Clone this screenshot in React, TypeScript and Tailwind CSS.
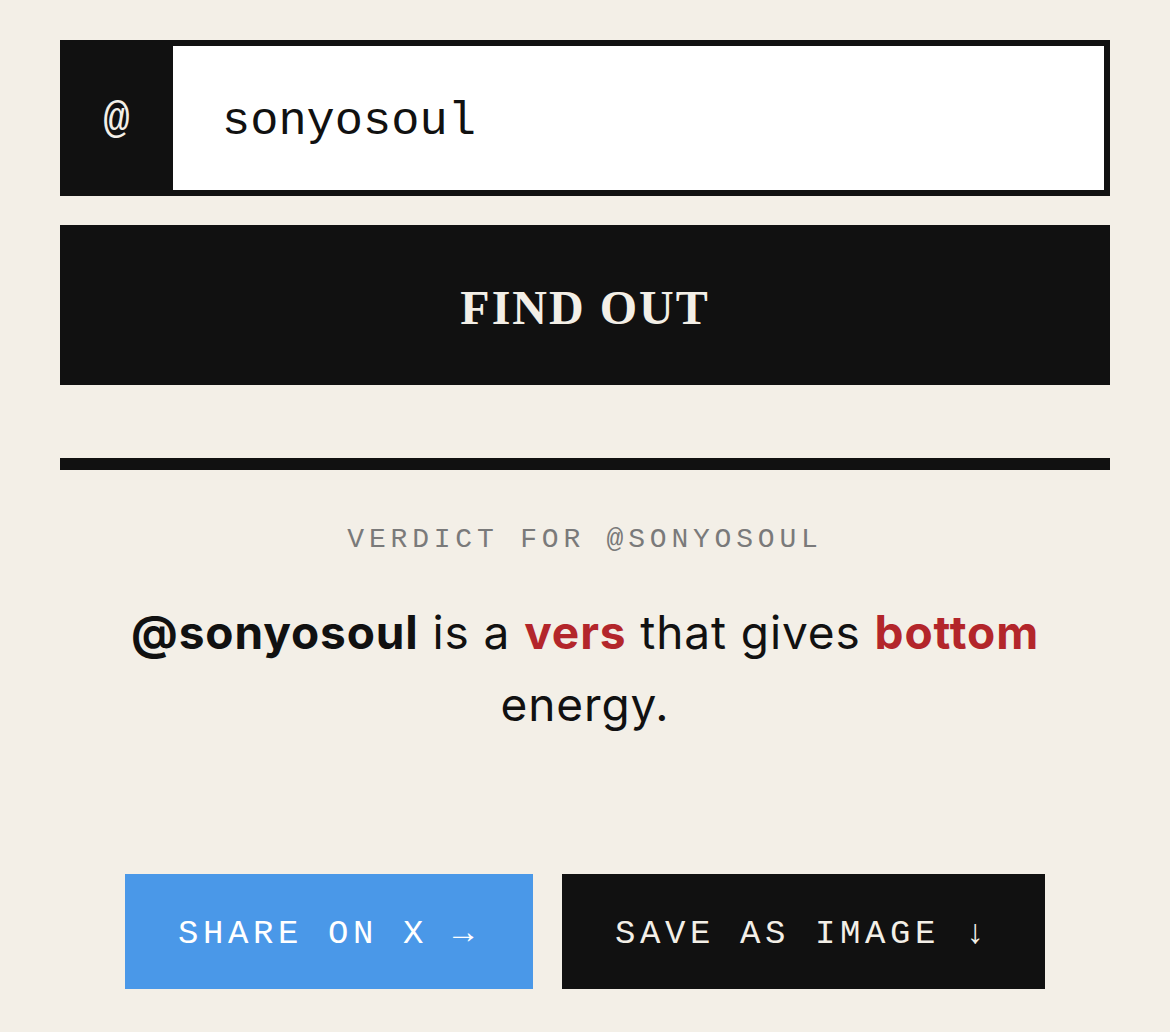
import React from 'react';

const mono = { fontFamily: '"Liberation Mono", "DejaVu Sans Mono", monospace' };

export default function App() {
  const handle = 'sonyosoul';

  return (
    <div className="min-h-[1032px] bg-[#f3efe7] pt-10">
      <div className="w-[1050px] mx-auto">
        {/* handle input */}
        <div className="flex h-[156px] border-[6px] border-l-0 border-[#111111] bg-white">
          <div
            className="w-[113px] bg-[#111111] flex items-center justify-center pt-1 text-[44px] text-[#f3efe7] leading-none"
            style={mono}
          >
            @
          </div>
          <div
            className="flex-1 flex items-center pl-[49px] pt-[6px] text-[47px] text-[#111111] leading-none"
            style={mono}
          >
            {handle}
          </div>
        </div>

        <button
          className="mt-[29px] w-full h-[160px] pt-[6px] bg-[#111111] text-[#f3efe7] text-[48px] font-bold tracking-[2px] leading-none"
          style={{ fontFamily: '"Liberation Serif", "DejaVu Serif", serif' }}
        >
          FIND OUT
        </button>

        <div className="mt-[73px] h-[12px] bg-[#111111]" />

        {/* verdict */}
        <p
          className="mt-[56px] text-center text-[28px] leading-none tracking-[4.8px] text-[#7a7a7a]"
          style={mono}
        >
          VERDICT FOR @{handle.toUpperCase()}
        </p>

        <p
          className="mt-[42px] mx-auto max-w-[960px] text-center text-[46px] leading-[72px] tracking-[0.9px] text-[#111111]"
          style={{ fontFamily: 'Inter, "Noto Sans", sans-serif' }}
        >
          <span className="font-bold">@{handle}</span> is a{' '}
          <span className="font-bold text-[#b3262b]">vers</span> that gives{' '}
          <span className="font-bold text-[#b3262b]">bottom</span> energy.
        </p>

        <div className="mt-[134px] flex justify-center gap-[29px]">
          <button
            className="h-[115px] pl-[53px] pr-[55px] pt-1 bg-[#4a98e8] text-white text-[34px] tracking-[4.6px] leading-none"
            style={mono}
          >
            SHARE ON X →
          </button>
          <button
            className="h-[115px] pl-[53px] pr-[55px] pt-1 bg-[#111111] text-[#f3efe7] text-[34px] tracking-[4.6px] leading-none"
            style={mono}
          >
            SAVE AS IMAGE ↓
          </button>
        </div>
      </div>
    </div>
  );
}
